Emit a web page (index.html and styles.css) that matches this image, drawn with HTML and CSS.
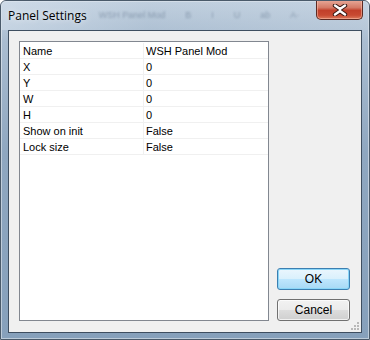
FILE: index.html
```html
<!DOCTYPE html>
<html lang="en">
<head>
  <meta charset="UTF-8">
  <title>Panel Settings</title>
  <link rel="stylesheet" href="styles.css">
</head>
<body>
  <div class="window">
    <div class="titlebar">
      <div class="title">Panel Settings</div>
      <div class="ghost">
        <span>WSH Panel Mod</span><span>B</span><span>I</span><span>U</span><span>ab</span><span>A&middot;</span>
      </div>
      <button class="close-btn" aria-label="Close">
        <svg width="16" height="12" viewBox="0 0 16 12">
          <path d="M3 1.5 L8 5 L13 1.5 M3 10.5 L8 7 L13 10.5 M8 5 L8 7" fill="none" stroke="#3a1a14" stroke-width="4.4" stroke-linecap="round" stroke-linejoin="round"/>
          <path d="M3 1.5 L8 5 L13 1.5 M3 10.5 L8 7 L13 10.5" fill="none" stroke="#fff" stroke-width="2.4" stroke-linecap="round" stroke-linejoin="round"/>
        </svg>
      </button>
    </div>

    <div class="client">
      <div class="prop-list">
        <div class="row"><div class="cell name">Name</div><div class="cell value">WSH Panel Mod</div></div>
        <div class="row"><div class="cell name">X</div><div class="cell value">0</div></div>
        <div class="row"><div class="cell name">Y</div><div class="cell value">0</div></div>
        <div class="row"><div class="cell name">W</div><div class="cell value">0</div></div>
        <div class="row"><div class="cell name">H</div><div class="cell value">0</div></div>
        <div class="row"><div class="cell name">Show on init</div><div class="cell value">False</div></div>
        <div class="row"><div class="cell name">Lock size</div><div class="cell value">False</div></div>
      </div>

      <div class="buttons">
        <button class="btn btn-default">OK</button>
        <button class="btn">Cancel</button>
      </div>

      <div class="grip">
        <span></span><span></span><span></span><span></span><span></span><span></span>
      </div>
    </div>
  </div>
</body>
</html>
```

FILE: styles.css
```css
body {
  margin: 0;
  padding: 0;
  background-color: #fff;
  font-family: "Liberation Sans", Arial, sans-serif;
}

.window {
  position: relative;
  width: 370px;
  height: 340px;
  box-sizing: border-box;
  border: 1px solid #4a5a6a;
  border-radius: 6px 6px 0 0;
  background: linear-gradient(180deg, #c8d6e4 0%, #aabdd1 12%, #8fa7c0 45%, #86a0bb 100%);
  box-shadow: inset 0 0 0 1px rgba(255, 255, 255, 0.45);
  overflow: hidden;
}

.titlebar {
  height: 29px;
  display: flex;
  align-items: flex-start;
  background: linear-gradient(90deg, rgba(210, 222, 234, 0.6) 0%, rgba(160, 180, 200, 0.2) 40%, rgba(190, 205, 220, 0.4) 100%);
}

.title {
  padding: 6px 0 0 7px;
  font-family: "Open Sans", "Noto Sans", sans-serif;
  font-size: 12px;
  color: #000;
  text-shadow: 0 0 6px rgba(255, 255, 255, 0.9);
}

.ghost {
  display: flex;
  gap: 20px;
  padding: 9px 0 0 12px;
  font-size: 9px;
  color: rgba(80, 100, 125, 0.45);
  filter: blur(1.2px);
  white-space: nowrap;
}

.close-btn {
  margin-left: auto;
  margin-right: 6px;
  margin-top: -1px;
  width: 47px;
  height: 20px;
  padding: 0;
  border: 1px solid #5d2a22;
  border-top: none;
  border-radius: 0 0 5px 5px;
  background: linear-gradient(180deg, #e9aa9a 0%, #d47a66 40%, #c2402a 55%, #c84a32 80%, #dc7a5c 100%);
  box-shadow: inset 0 0 0 1px rgba(255, 200, 180, 0.5);
  display: flex;
  align-items: center;
  justify-content: center;
}

.client {
  position: relative;
  margin: 0 7px 0 7px;
  height: 303px;
  box-sizing: border-box;
  border: 1px solid #3e4e60;
  background-color: #f0f0f0;
  padding: 10px 11px 11px 10px;
  display: flex;
  gap: 8px;
}

.prop-list {
  width: 252px;
  box-sizing: border-box;
  border: 1px solid #828790;
  background-color: #fff;
  padding-top: 1px;
  font-size: 11px;
  color: #000;
}

.row {
  display: flex;
  height: 16px;
  box-sizing: border-box;
  border-bottom: 1px solid #f0f0f0;
}

.cell {
  line-height: 16px;
  white-space: nowrap;
}

.name {
  width: 124px;
  padding-left: 3px;
  box-sizing: border-box;
  border-right: 1px solid #f0f0f0;
}

.value {
  padding-left: 2px;
}

.buttons {
  display: flex;
  flex-direction: column;
  justify-content: flex-end;
  gap: 9px;
}

.btn {
  width: 73px;
  height: 22px;
  padding: 0;
  box-sizing: border-box;
  border: 1px solid #707070;
  border-radius: 3px;
  background: linear-gradient(180deg, #f2f2f2 0%, #ebebeb 50%, #dddddd 51%, #cfcfcf 100%);
  box-shadow: inset 0 0 0 1px rgba(255, 255, 255, 0.7);
  font-family: "Liberation Sans", Arial, sans-serif;
  font-size: 12px;
  color: #000;
}

.btn-default {
  border-color: #3c7fb1;
  background: linear-gradient(180deg, #eaf6fd 0%, #d9f0fc 50%, #bee6fd 51%, #a7d9f5 100%);
  box-shadow: inset 0 0 0 1px #8ad6f8;
}

.grip {
  position: absolute;
  right: 2px;
  bottom: 2px;
  width: 9px;
  height: 9px;
}

.grip span {
  position: absolute;
  width: 2px;
  height: 2px;
  background-color: #b8b8b8;
}

.grip span:nth-child(1) { right: 0; bottom: 0; }
.grip span:nth-child(2) { right: 3px; bottom: 0; }
.grip span:nth-child(3) { right: 6px; bottom: 0; }
.grip span:nth-child(4) { right: 0; bottom: 3px; }
.grip span:nth-child(5) { right: 3px; bottom: 3px; }
.grip span:nth-child(6) { right: 0; bottom: 6px; }
```
